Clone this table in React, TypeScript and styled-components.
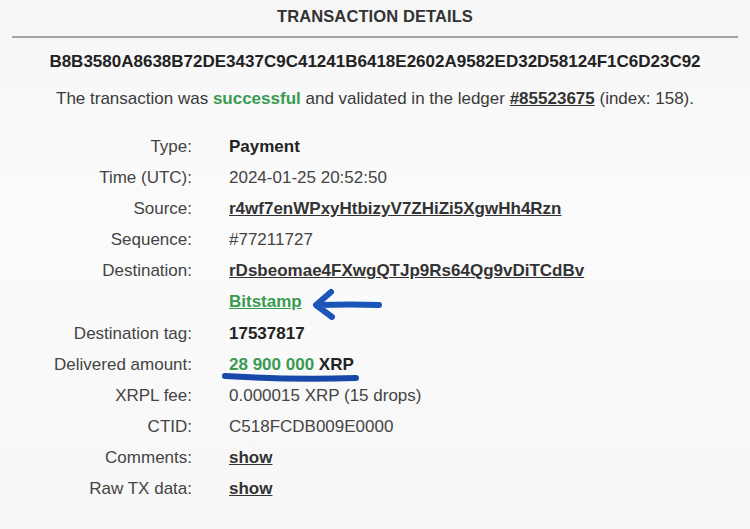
import { createGlobalStyle, styled } from 'styled-components';

const GlobalStyle = createGlobalStyle`
    html, body {
        margin: 0;
        padding: 0;
    }
    body {
        background: linear-gradient(180deg, #f6f6f6 0%, #fbfbfb 40%, #f7f7f7 100%);
        font-family: 'Liberation Sans', Arial, sans-serif;
        color: #333;
    }
`;

type Row = {
    label: string;
    value: React.ReactNode;
};

export default function App() {
    const rows: Row[] = [
        { label: 'Type:', value: <Strong>Payment</Strong> },
        { label: 'Time (UTC):', value: '2024-01-25 20:52:50' },
        { label: 'Source:', value: <Link>r4wf7enWPxyHtbizyV7ZHiZi5XgwHh4Rzn</Link> },
        { label: 'Sequence:', value: '#77211727' },
        { label: 'Destination:', value: <Link>rDsbeomae4FXwgQTJp9Rs64Qg9vDiTCdBv</Link> },
        { label: '', value: <Link $green>Bitstamp</Link> },
        { label: 'Destination tag:', value: <Strong>17537817</Strong> },
        {
            label: 'Delivered amount:',
            value: (
                <Strong>
                    <Green>28 900 000</Green> XRP
                </Strong>
            ),
        },
        { label: 'XRPL fee:', value: '0.000015 XRP (15 drops)' },
        { label: 'CTID:', value: 'C518FCDB009E0000' },
        { label: 'Comments:', value: <Link>show</Link> },
        { label: 'Raw TX data:', value: <Link>show</Link> },
    ];

    return (
        <>
            <GlobalStyle />
            <Page>
                <Heading>TRANSACTION DETAILS</Heading>
                <Rule />
                <Hash>B8B3580A8638B72DE3437C9C41241B6418E2602A9582ED32D58124F1C6D23C92</Hash>
                <Summary>
                    The transaction was <Green>successful</Green> and validated in the ledger{' '}
                    <Link>#85523675</Link> (index: 158).
                </Summary>
                <Table>
                    {rows.map((row, i) => (
                        <TableRow key={i}>
                            <Label>{row.label}</Label>
                            <Value>{row.value}</Value>
                        </TableRow>
                    ))}
                </Table>

                {/* hand drawn marks on top of the screenshot */}
                <Arrow width="80" height="40" viewBox="0 0 80 40">
                    <path
                        d="M 72 20 Q 45 19 10 20 M 24 7 L 9 20 L 25 32"
                        fill="none"
                        stroke="#1b55b9"
                        strokeWidth="6"
                        strokeLinecap="round"
                        strokeLinejoin="round"
                    />
                </Arrow>
                <Underline width="150" height="14" viewBox="0 0 150 14">
                    <path
                        d="M 5 5 Q 70 9 136 7"
                        fill="none"
                        stroke="#1848aa"
                        strokeWidth="6"
                        strokeLinecap="round"
                    />
                </Underline>
            </Page>
        </>
    );
}

const Page = styled.div`
    position: relative;
    width: 750px;
    height: 529px;
    display: flex;
    flex-direction: column;
    align-items: center;
    overflow: hidden;
`;

const Heading = styled.div`
    margin-top: 6px;
    font-size: 16.5px;
    font-weight: bold;
    letter-spacing: 0.1px;
    line-height: 20px;
`;

const Rule = styled.div`
    width: 726px;
    height: 2px;
    margin-top: 10px;
    background: #a3a3a3;
`;

const Hash = styled.div`
    margin-top: 14px;
    font-size: 17px;
    font-weight: bold;
    line-height: 20px;
    color: #222;
`;

const Summary = styled.div`
    margin-top: 17px;
    font-size: 17px;
    line-height: 20px;
    color: #3a3a3a;
`;

const Table = styled.div`
    margin-top: 28px;
    align-self: flex-start;
    display: grid;
    grid-template-columns: 192px auto;
    column-gap: 37px;
    row-gap: 11.1px;
`;

const TableRow = styled.div`
    display: contents;
`;

const Label = styled.div`
    text-align: right;
    font-size: 17px;
    line-height: 20px;
    color: #444;
    white-space: nowrap;
`;

const Value = styled.div`
    font-size: 17px;
    line-height: 20px;
    color: #444;
    white-space: nowrap;
`;

const Strong = styled.span`
    font-weight: bold;
    color: #222;
`;

const Green = styled.span`
    font-weight: bold;
    color: #3a9a52;
`;

const Link = styled.span<{ $green?: boolean }>`
    font-weight: bold;
    text-decoration: underline;
    color: ${(p) => (p.$green ? '#3a9a52' : '#333')};
`;

const Arrow = styled.svg`
    position: absolute;
    left: 307px;
    top: 285px;
`;

const Underline = styled.svg`
    position: absolute;
    left: 220px;
    top: 371px;
`;
